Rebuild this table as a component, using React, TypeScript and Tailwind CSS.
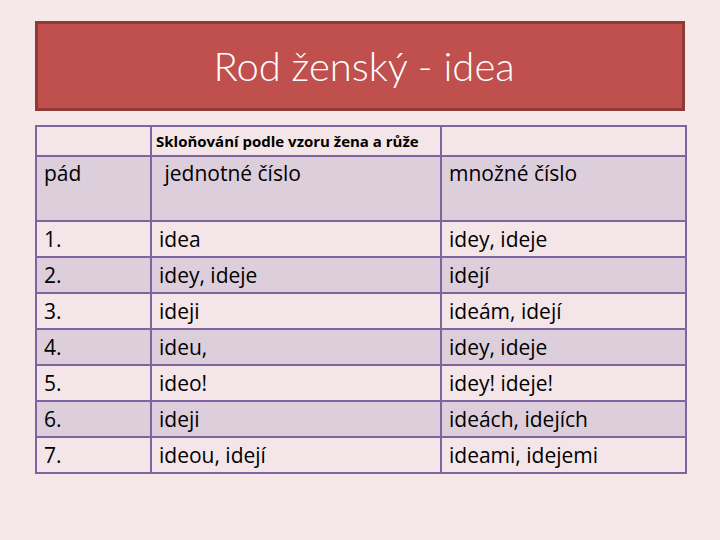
const rows: [string, string, string][] = [
  ['1.', 'idea', 'idey, ideje'],
  ['2.', 'idey, ideje', 'idejí'],
  ['3.', 'ideji', 'ideám, idejí'],
  ['4.', 'ideu,', 'idey, ideje'],
  ['5.', 'ideo!', 'idey! ideje!'],
  ['6.', 'ideji', 'ideách, idejích'],
  ['7.', 'ideou, idejí', 'ideami, idejemi'],
];

export default function App() {
  return (
    <div
      className="w-[720px] h-[540px] bg-[#f6e7e8] pt-[21px] px-[35px]"
      style={{ fontFamily: '"Open Sans", "Noto Sans", sans-serif' }}
    >
      <div className="h-[90px] bg-[#c0504d] border-[3px] border-[#8f3a38] flex items-center justify-center">
        <h1
          className="text-white text-[40px] leading-none pl-2 font-light"
          style={{ fontFamily: 'Lato, "Open Sans", sans-serif' }}
        >
          Rod ženský - idea
        </h1>
      </div>

      <table className="mt-[14px] w-[650px] border-collapse table-fixed text-[21px] text-black">
        <colgroup>
          <col className="w-[115px]" />
          <col className="w-[290px]" />
          <col className="w-[245px]" />
        </colgroup>
        <tbody>
          <tr className="h-[30px] bg-[#f4e6e8]">
            <td className="border-2 border-[#8064a2]"></td>
            <td className="border-2 border-[#8064a2] px-[4px] text-[15px] font-bold align-middle whitespace-nowrap">
              Skloňování podle vzoru žena a růže
            </td>
            <td className="border-2 border-[#8064a2]"></td>
          </tr>
          <tr className="h-[65px] bg-[#dccedb]">
            <td className="border-2 border-[#8064a2] px-[7px] align-top pt-[1px]">pád</td>
            <td className="border-2 border-[#8064a2] px-[7px] align-top pt-[1px]">&nbsp;jednotné číslo</td>
            <td className="border-2 border-[#8064a2] px-[7px] align-top pt-[1px]">množné číslo</td>
          </tr>
          {rows.map(([a, b, c], i) => (
            <tr key={a} className={`h-[36px] ${i % 2 === 0 ? 'bg-[#f4e6e8]' : 'bg-[#dccedb]'}`}>
              <td className="border-2 border-[#8064a2] px-[7px] leading-none">{a}</td>
              <td className="border-2 border-[#8064a2] px-[7px] leading-none">{b}</td>
              <td className="border-2 border-[#8064a2] px-[7px] leading-none">{c}</td>
            </tr>
          ))}
        </tbody>
      </table>
    </div>
  );
}
